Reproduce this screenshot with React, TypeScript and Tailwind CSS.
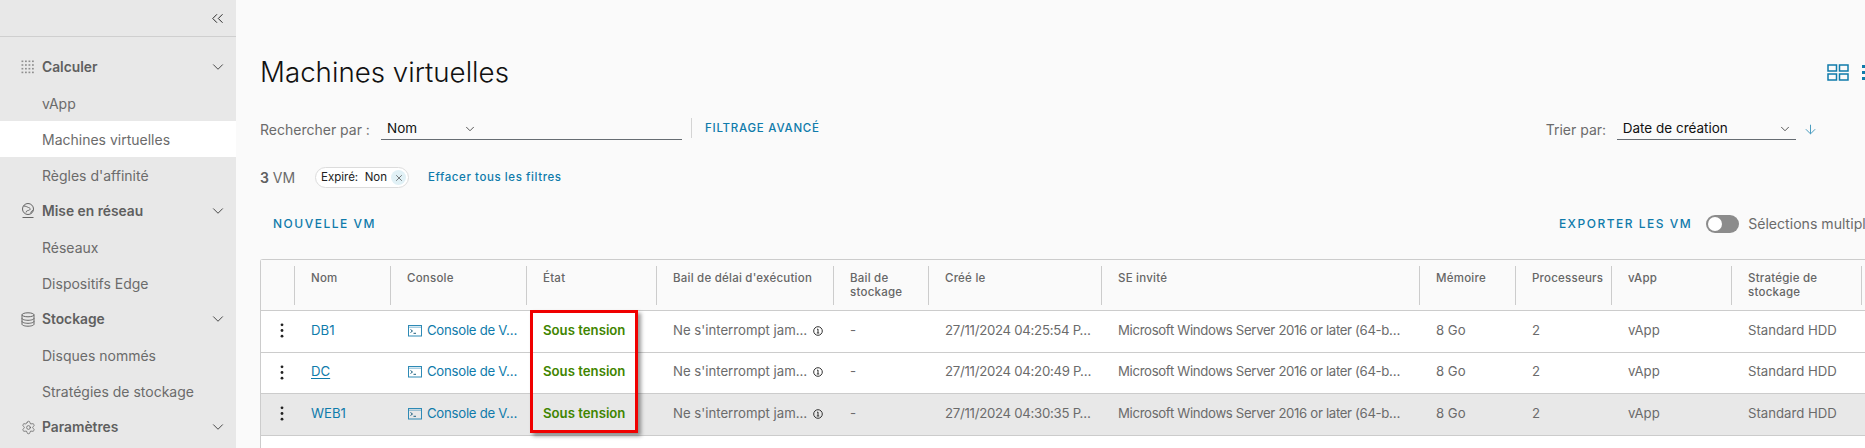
import React from "react";
import { ChevronDown, ChevronsLeft, ArrowDown, X, Settings } from "lucide-react";

const GridIcon = () => (
  <svg width="14" height="14" viewBox="0 0 14 14" fill="#8f8f8f" className="shrink-0">
    {[0, 1, 2, 3].map((r) =>
      [0, 1, 2, 3].map((c) => <rect key={`${r}-${c}`} x={0.5 + c * 3.5} y={0.5 + r * 3.7} width="1.8" height="1.6" />)
    )}
  </svg>
);
const GlobeIcon = () => (
  <svg width="14" height="16" viewBox="0 0 14 16" fill="none" stroke="#666" strokeWidth="1" className="shrink-0">
    <circle cx="7" cy="6" r="5.500" />
    <path d="M2.500 3c2.500 0 3.500 1 5 1.500S10 6 8.500 7 5.500 7 5 9.500M10 10.500c-.5-1.500.5-2.500 2-3" />
    <path d="M1.500 14.500h11" />
  </svg>
);
const DbIcon = () => (
  <svg width="14" height="15" viewBox="0 0 14 15" fill="none" stroke="#666" strokeWidth="1" className="shrink-0">
    <ellipse cx="7" cy="2.800" rx="6" ry="2" />
    <path d="M1 2.800v9.400c0 1.100 2.700 2 6 2s6-.9 6-2V2.800M1 6.300c0 1.100 2.700 2 6 2s6-.9 6-2M1 9.300c0 1.100 2.700 2 6 2s6-.9 6-2" />
  </svg>
);
const ConsoleIcon = () => (
  <svg width="14" height="12" viewBox="0 0 14 12" fill="none" stroke="#2e8ab5" strokeWidth="1" className="shrink-0">
    <rect x="0.500" y="0.500" width="13" height="10.500" />
    <path d="M1 2.200h12" strokeOpacity="0.6" />
    <path d="M2.500 4.500l2 1.500-2 1.500M5.500 8.300h2.500" stroke="#1c5f80" />
  </svg>
);
const InfoIcon = () => (
  <svg width="10" height="10" viewBox="0 0 10 10" fill="none" stroke="#333" strokeWidth="1" className="shrink-0">
    <circle cx="5" cy="5" r="4.300" />
    <path d="M5 3v4M4 3.200h1M3.800 7h2.400" />
  </svg>
);
const CardsIcon = () => (
  <svg width="22" height="17" viewBox="0 0 22 17" fill="none" stroke="#0f7bab" strokeWidth="1.500" className="shrink-0">
    <rect x="1" y="1" width="8.500" height="6" />
    <rect x="12.500" y="1" width="8.500" height="6" />
    <rect x="1" y="10" width="8.500" height="6" />
    <rect x="12.500" y="10" width="8.500" height="6" />
  </svg>
);
const Kebab = () => (
  <svg width="4" height="15" viewBox="0 0 4 15" fill="#222" className="shrink-0">
    <circle cx="2" cy="1.800" r="1.400" />
    <circle cx="2" cy="7.500" r="1.400" />
    <circle cx="2" cy="13.200" r="1.400" />
  </svg>
);

function Head({ icon, label }: { icon: React.ReactNode; label: string }) {
  return (
    <div className="flex h-9 items-center pl-[21px] pr-[9px]">
      <span className="flex w-[21px] shrink-0 items-center">{icon}</span>
      <span className="flex-1 text-[13.800px] font-semibold text-[#5f5f5f]">{label}</span>
      <ChevronDown size={18} strokeWidth={1.300} className="text-[#444]" />
    </div>
  );
}
function Item({ label, active }: { label: string; active?: boolean }) {
  return (
    <div className={`flex h-9 items-center pl-[42px] text-[14px] text-[#6b6b6b] ${active ? "bg-white" : ""}`}>{label}</div>
  );
}

const columns = "grid-cols-[34px_96px_136px_130px_177px_95px_173px_318px_96px_96px_120px_130px_100px]";
const headers = [
  "",
  "Nom",
  "Console",
  "État",
  "Bail de délai d'exécution",
  "Bail de stockage",
  "Créé le",
  "SE invité",
  "Mémoire",
  "Processeurs",
  "vApp",
  "Stratégie de stockage",
  "",
];

const rows = [
  { name: "DB1", date: "27/11/2024 04:25:54 P…", h: "h-[42px]", bg: "bg-white", under: false },
  { name: "DC", date: "27/11/2024 04:20:49 P…", h: "h-[41px]", bg: "bg-white", under: true },
  { name: "WEB1", date: "27/11/2024 04:30:35 P…", h: "h-[42px]", bg: "bg-[#e8e8e8]", under: false },
];

function Cell({ children, className = "" }: { children?: React.ReactNode; className?: string }) {
  return <div className={`flex min-w-0 items-center whitespace-nowrap pb-[2px] pl-[16px] ${className}`}>{children}</div>;
}

export default function App() {
  return (
    <div
      className="flex h-[448px] w-[1865px] overflow-hidden bg-[#fafafa] text-[13.200px] text-[#6b6b6b]"
      style={{ fontFamily: "Inter, 'Noto Sans', sans-serif" }}
    >
      <aside className="h-full w-[236px] shrink-0 bg-[#e8e8e8]">
        <div className="flex h-[37px] items-center justify-end border-b border-[#cfcfcf] pr-[9px]">
          <ChevronsLeft size={19} strokeWidth={1.200} className="text-[#222]" />
        </div>
        <div className="pt-[12px]">
          <Head icon={<GridIcon />} label="Calculer" />
          <Item label="vApp" />
          <Item label="Machines virtuelles" active />
          <Item label="Règles d'affinité" />
          <Head icon={<GlobeIcon />} label="Mise en réseau" />
          <Item label="Réseaux" />
          <Item label="Dispositifs Edge" />
          <Head icon={<DbIcon />} label="Stockage" />
          <Item label="Disques nommés" />
          <Item label="Stratégies de stockage" />
          <Head icon={<Settings size={15} strokeWidth={1.100} className="text-[#555]" />} label="Paramètres" />
        </div>
      </aside>

      <main className="w-[1700px] shrink-0 pl-[24px] pt-[52px]">
        <div className="flex h-[40px] items-center">
          <h1 className="flex-1 pt-[2px] text-[27.700px] font-light leading-none text-[#111]">Machines virtuelles</h1>
          <div className="mr-[70px] flex items-center gap-[13px]">
            <CardsIcon />
            <svg width="4" height="17" viewBox="0 0 4 17" fill="#0f7bab">
              <rect width="3" height="3" y="1" />
              <rect width="3" height="3" y="7" />
              <rect width="3" height="3" y="13" />
            </svg>
          </div>
        </div>

        <div className="mt-[24px] flex h-[24px] items-center">
          <span className="w-[121px] shrink-0 pt-[2px] text-[14px] text-[#6b6b6b]">Rechercher par :</span>
          <div className="flex h-full w-[301px] shrink-0 items-center border-b border-[#666c72] pl-[6px] pt-[2px] text-[13.500px] text-[#111]">
            <span className="w-[76px]">Nom</span>
            <ChevronDown size={14} strokeWidth={1.400} className="text-[#333]" />
          </div>
          <div className="ml-[9px] h-[20px] w-px bg-[#d4d4d4]" />
          <span className="ml-[13px] pt-[2px] text-[11.500px] font-medium tracking-[0.065em] text-[#0f7bab]">FILTRAGE AVANCÉ</span>
          <div className="ml-[726px] flex h-full items-center">
            <span className="w-[71px] pt-[2px] text-[14px] text-[#6b6b6b]">Trier par:</span>
            <div className="flex h-full w-[179px] items-center justify-between border-b border-[#666c72] pl-[6px] pr-[4px] pt-[2px] text-[13.500px] text-[#111]">
              <span>Date de création</span>
              <ChevronDown size={14} strokeWidth={1.400} className="text-[#333]" />
            </div>
            <ArrowDown size={15} strokeWidth={1.600} className="ml-[7px] mt-[2px] text-[#4b9dc0]" />
          </div>
        </div>

        <div className="mt-[27px] flex h-[21px] items-center">
          <span className="w-[55px] text-[14px]">
            <b className="font-semibold text-[#5f5f5f]">3</b> VM
          </span>
          <div className="flex h-[21px] w-[94px] items-center justify-between rounded-full border border-[#dcdcdc] bg-white pl-[5px] pr-[2px] text-[11.500px] text-[#222]">
            <span className="pt-[1px]">Expiré:&nbsp; Non</span>
            <span className="flex h-[15px] w-[15px] items-center justify-center rounded-full bg-[#e1f1f6]">
              <X size={10} strokeWidth={1.500} className="text-[#333]" />
            </span>
          </div>
          <span className="ml-[19px] pt-[1px] text-[11.500px] font-medium tracking-[0.050em] text-[#0f7bab]">Effacer tous les filtres</span>
        </div>

        <div className="mt-[22px] flex h-[28px] items-center pl-[13px]">
          <span className="text-[12px] font-medium tracking-[0.125em] text-[#0f7bab]">NOUVELLE VM</span>
          <div className="ml-[1183px] flex items-center">
            <span className="text-[12px] font-medium tracking-[0.125em] text-[#0f7bab]">EXPORTER LES VM</span>
            <div className="ml-[14px] flex h-[18px] w-[33px] items-center rounded-full bg-[#8c8c8c] pl-[2px]">
              <span className="h-[14px] w-[14px] rounded-full bg-white" />
            </div>
            <span className="ml-[9px] whitespace-nowrap text-[14.100px]">Sélections multiples</span>
          </div>
        </div>

        <div className="relative mt-[21px] h-[189px] rounded-tl-[3px] border-l border-t border-[#cccccc] bg-white">
          <div className={`grid h-[51px] ${columns} border-b border-[#cccccc] bg-[#fafafa] pt-[6px]`}>
            {headers.map((h, i) => (
              <div
                key={i}
                className={`h-[39px] pl-[16px] pr-[2px] pt-[5px] text-[11.500px] font-medium leading-[14px] tracking-[0.020em] text-[#666] ${i === 12 ? "" : "border-r border-[#cccccc]"}`}
              >
                {h}
              </div>
            ))}
          </div>
          {rows.map((r) => (
            <div key={r.name} className={`grid ${r.h} ${columns} ${r.bg} border-b border-[#cccccc]`}>
              <div className="flex items-center justify-center pb-[2px] pl-[7px]">
                <Kebab />
              </div>
              <Cell>
                <span className={`text-[#0f7bab] ${r.under ? "underline underline-offset-2" : ""}`}>{r.name}</span>
              </Cell>
              <Cell className="gap-[5px] pl-[17px]">
                <ConsoleIcon />
                <span className="tracking-[-0.020em] text-[#0f7bab]">Console de V…</span>
              </Cell>
              <Cell>
                <span className="font-semibold text-[#3f8500]">Sous tension</span>
              </Cell>
              <Cell className="gap-[6px]">
                <span>Ne s'interrompt jam…</span>
                <InfoIcon />
              </Cell>
              <Cell>-</Cell>
              <Cell>
                <span className="tracking-[-0.020em]">{r.date}</span>
              </Cell>
              <Cell>
                <span className="tracking-[-0.025em]">Microsoft Windows Server 2016 or later (64-b…</span>
              </Cell>
              <Cell>8 Go</Cell>
              <Cell>2</Cell>
              <Cell>vApp</Cell>
              <Cell>Standard HDD</Cell>
              <Cell />
            </div>
          ))}
          <div className="pointer-events-none absolute left-[269px] top-[50px] h-[123px] w-[108px] border-[3px] border-[#f00000] shadow-[3px_3px_4px_rgba(0,0,0,0.4)]" />
        </div>
      </main>
    </div>
  );
}
